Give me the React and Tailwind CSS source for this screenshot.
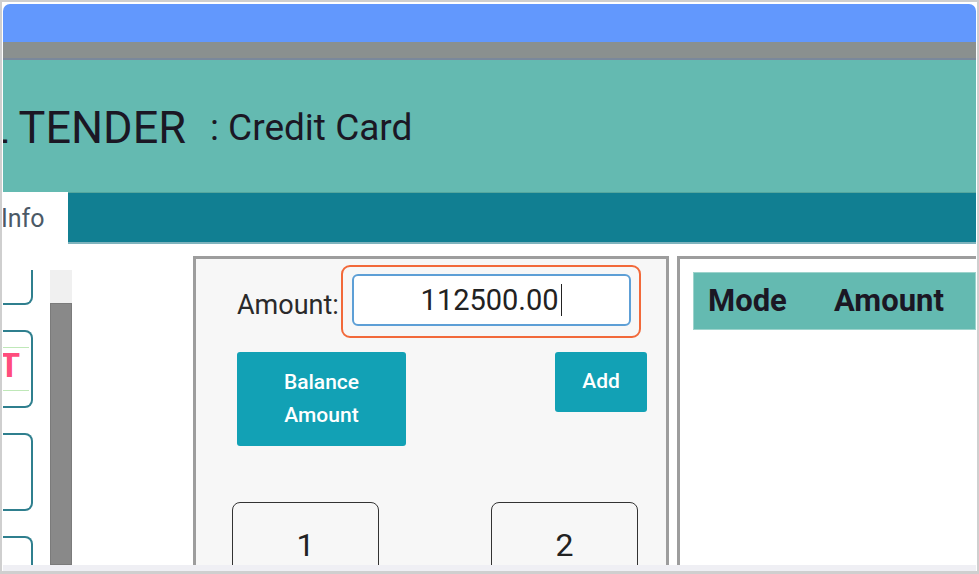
import React from 'react';

const font = { fontFamily: 'Roboto, "Noto Sans", sans-serif' };

function SideButton({ first, children }) {
  return (
    <div
      className={`relative h-[78px] w-[30px] shrink-0 rounded-r-[8px] border-2 border-l-0 border-[#2f7f8e] ${first ? 'mt-[-43px]' : 'mt-[25px]'}`}
    >
      {children}
    </div>
  );
}

export default function App() {
  return (
    <div className="w-[979px] h-[574px] bg-[#cfcfcf] p-[2px] pb-[3px] overflow-hidden" style={font}>
      <div className="h-full bg-white flex flex-col pt-[2px] pl-[1px] pr-[1px]">
        <div className="flex-1 min-h-0 overflow-hidden rounded-t-[7px] flex flex-col">
          {/* window chrome */}
          <div className="h-[38px] shrink-0 bg-[#6298fd]" />
          <div className="h-[16px] shrink-0 bg-[#8a908f]" />
          <div className="h-[2px] shrink-0 bg-[#7a889b]" />

          {/* title */}
          <div className="h-[133px] shrink-0 bg-[#64bab1] border-b border-[#55a79e] flex items-center overflow-hidden whitespace-nowrap text-[#1b1724]">
            <span className="ml-[-130px] mt-[2px] text-[45px] leading-none">TOTAL TENDER</span>
            <span className="ml-[24px] mt-[2px] text-[37px] leading-none">: Credit Card</span>
          </div>

          {/* tabs */}
          <div className="h-[51px] shrink-0 bg-[#117f92] border-b-2 border-[#7fb3bd] flex items-end">
            <div className="w-[65px] h-[52px] mb-[-2px] bg-white flex items-center overflow-hidden">
              <span className="ml-[-2px] text-[25px] text-[#4b5966] leading-none">Info</span>
            </div>
          </div>

          {/* body */}
          <div className="flex-1 min-h-0 flex items-stretch">
            <div className="w-[30px] mt-[26px] overflow-hidden flex flex-col">
              <SideButton first />
              <SideButton>
                <div className="absolute left-0 right-[2px] top-[15px] h-px bg-[#bfe8b8]" />
                <div className="absolute left-0 right-[2px] bottom-[15px] h-px bg-[#bfe8b8]" />
                <span className="absolute left-[-4px] top-[16px] text-[34px] font-bold leading-none text-[#ff4d7d]">T</span>
              </SideButton>
              <SideButton />
              <SideButton />
            </div>

            <div className="ml-[17px] w-[22px] mt-[26px] flex flex-col">
              <div className="h-[33px] bg-[#f0f0f0]" />
              <div className="flex-1 bg-[#898989] border border-[#7b7b7b]" />
            </div>

            {/* keypad panel */}
            <div className="ml-[121px] mt-[12px] w-[476px] bg-[#f7f7f7] border-t-[3px] border-x-[3px] border-[#9d9d9d] flex flex-col">
              <div className="mt-[6px] pl-[41px] flex items-center">
                <span className="mt-[8px] text-[27px] text-[#2a2a2a] leading-none">Amount:</span>
                <div className="ml-[2px] w-[300px] h-[73px] rounded-[9px] border-2 border-[#f2693a] pl-[9px] pt-[7px]">
                  <div className="w-[279px] h-[52px] rounded-[6px] border-2 border-[#5d9fd6] bg-white flex items-center justify-center">
                    <span className="text-[29px] text-[#222] leading-none">112500.00</span>
                    <span className="ml-[2px] w-[1.5px] h-[32px] bg-[#222]" />
                  </div>
                </div>
              </div>

              <div className="mt-[14px] ml-[41px] w-[410px] flex justify-between items-start">
                <button className="w-[169px] h-[94px] rounded-[3px] bg-[#12a1b5] text-white text-[21px] font-medium leading-[33px]">
                  Balance
                  <br />
                  Amount
                </button>
                <button className="w-[92px] h-[60px] rounded-[3px] bg-[#12a1b5] text-white text-[21px] font-medium">
                  Add
                </button>
              </div>

              <div className="mt-[56px] pl-[36px] flex gap-[112px]">
                <div className="w-[147px] h-[90px] rounded-[8px] border-[1.5px] border-[#333] bg-[#f7f7f7] flex justify-center pt-[26px] text-[32px] text-[#222] leading-none">
                  1
                </div>
                <div className="w-[147px] h-[90px] rounded-[8px] border-[1.5px] border-[#333] bg-[#f7f7f7] flex justify-center pt-[26px] text-[32px] text-[#222] leading-none">
                  2
                </div>
              </div>
            </div>

            {/* payments table */}
            <div className="ml-[8px] mt-[12px] flex-1 bg-white border-t-[3px] border-l-[3px] border-[#9d9d9d] pl-[13px] pt-[13px]">
              <div className="h-[58px] bg-[#64bab1] border border-[#9dd3cc] flex items-center pl-[14px] text-[31px] font-bold text-[#1b1724] whitespace-nowrap">
                <span className="w-[126px]">Mode</span>
                <span>Amount</span>
              </div>
            </div>
          </div>
        </div>
        <div className="h-[6px] shrink-0 bg-[#efeff4]" />
      </div>
    </div>
  );
}
